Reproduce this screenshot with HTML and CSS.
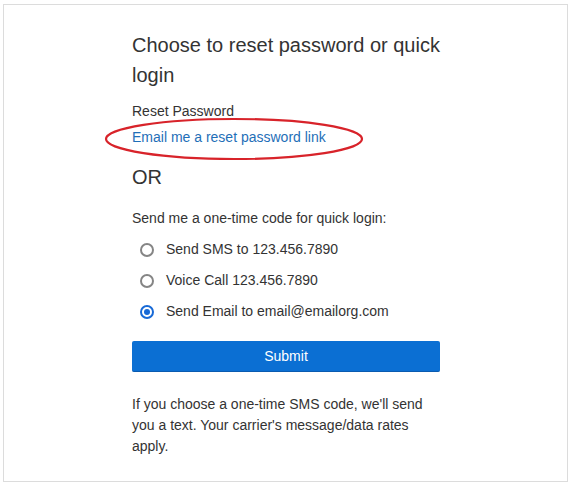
FILE: index.html
```html
<!DOCTYPE html>
<html lang="en">
<head>
  <meta charset="UTF-8">
  <title>Choose to reset password or quick login</title>
  <link rel="stylesheet" href="styles.css">
</head>
<body>
  <div class="login-card">
    <div class="login-col">
      <h1 class="login-title">Choose to reset password or quick login</h1>
      <div class="reset-label">Reset Password</div>
      <div class="reset-link-wrap">
        <a class="reset-link" href="#">Email me a reset password link</a>
        <!-- пометка красным -->
        <svg class="mark-ellipse" width="262" height="46" viewBox="0 0 262 46">
          <ellipse cx="131" cy="23" rx="128" ry="20" fill="none" stroke="#d8232a" stroke-width="2.2"/>
        </svg>
      </div>
      <div class="or-text">OR</div>
      <div class="code-label">Send me a one-time code for quick login:</div>
      <ul class="radio-list">
        <li class="radio-row"><span class="radio"></span>Send SMS to 123.456.7890</li>
        <li class="radio-row"><span class="radio"></span>Voice Call 123.456.7890</li>
        <li class="radio-row"><span class="radio checked"></span>Send Email to email@emailorg.com</li>
      </ul>
      <button class="submit-btn">Submit</button>
      <p class="note">If you choose a one-time SMS code, we'll send you a text. Your carrier's message/data rates apply.</p>
    </div>
  </div>
</body>
</html>
```

FILE: styles.css
```css
body {
  margin: 0;
  background: #fff;
  font-family: "Liberation Sans", Arial, sans-serif;
  color: #333;
}
.login-card {
  margin: 4px 0 0 3px;
  width: 565px;
  height: 478px;
  border: 1px solid #dcdcdc;
  padding: 25px 0 0 0;
  box-sizing: border-box;
}
.login-col {
  width: 308px;
  margin-left: 128px;
}
.login-title {
  margin: 0;
  font-size: 20px;
  font-weight: normal;
  line-height: 30px;
  color: #333;
}
.reset-label {
  margin-top: 11px;
  font-size: 14px;
  line-height: 20px;
}
.reset-link-wrap {
  position: relative;
  margin-top: 6px;
  height: 20px;
}
.reset-link {
  font-size: 14px;
  line-height: 20px;
  color: #1f6fb8;
  text-decoration: none;
}
.mark-ellipse {
  position: absolute;
  left: -29px;
  top: -11px;
  pointer-events: none;
}
.or-text {
  margin-top: 15px;
  font-size: 20px;
  line-height: 30px;
}
.code-label {
  margin-top: 16px;
  font-size: 14px;
  line-height: 20px;
}
.radio-list {
  list-style: none;
  margin: 6px 0 0 0;
  padding: 0;
}
.radio-row {
  display: flex;
  align-items: center;
  height: 31px;
  font-size: 14px;
  line-height: 31px;
}
.radio {
  width: 14px;
  height: 14px;
  box-sizing: border-box;
  border: 2px solid #858585;
  border-radius: 50%;
  margin: 0 12px 0 8px;
  flex-shrink: 0;
  position: relative;
}
.radio.checked {
  border-color: #1769d6;
}
.radio.checked::after {
  content: '';
  position: absolute;
  left: 2px; top: 2px;
  width: 6px; height: 6px;
  border-radius: 50%;
  background: #1769d6;
}
.submit-btn {
  display: block;
  margin-top: 14px;
  width: 308px;
  height: 31px;
  border: none;
  border-bottom: 1px solid #0a5bb0;
  border-radius: 2px;
  background: #0b6fd3;
  color: #fff;
  font-family: "Liberation Sans", Arial, sans-serif;
  font-size: 14px;
  cursor: pointer;
}
.note {
  margin: 22px 0 0 0;
  font-size: 14px;
  line-height: 21px;
}
```
